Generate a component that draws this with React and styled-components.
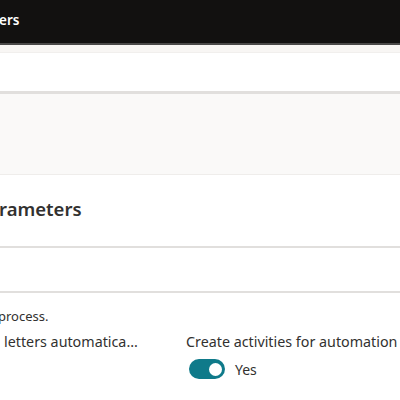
import React from "react";
import styled, { createGlobalStyle } from "styled-components";

const Global = createGlobalStyle`
  html, body { margin: 0; padding: 0; background: #ffffff; }
  body { width: 400px; height: 400px; overflow: hidden; font-family: "Noto Sans", "Open Sans", sans-serif; color: #323130; }
`;

const Page = styled.div`
  width: 400px;
  height: 400px;
  overflow: hidden;
  display: flex;
  flex-direction: column;
`;

const TopBar = styled.header`
  height: 43px;
  background: #121110;
  border-bottom: 2px solid #4a4948;
  display: flex;
  align-items: center;
  color: #ffffff;
  font-size: 13.5px;
  font-weight: 600;
  box-sizing: content-box;
`;

const TopTitle = styled.span`
  margin-left: -1px;
  margin-top: -3px;
`;

const Strip = styled.div`
  height: 7px;
  background: #f8f6f4;
  border-bottom: 1px solid #f1efed;
`;

const CommandBar = styled.div`
  height: 38px;
  background: #ffffff;
  border-bottom: 3px solid #e1dfdd;
`;

const Band = styled.div`
  height: 80px;
  background: #faf9f8;
  border-bottom: 1px solid #efedeb;
`;

const TitleRow = styled.div`
  height: 71px;
  display: flex;
  align-items: center;
  border-bottom: 2px solid #e1dfdd;
`;

const Title = styled.h1`
  margin: -5px 0 0 -1px;
  font-size: 18.5px;
  font-weight: 600;
  color: #323130;
`;

const TabRow = styled.div`
  height: 43px;
  border-bottom: 2px solid #e1dfdd;
`;

const Body = styled.div`
  padding-top: 15px;
  display: flex;
  flex-direction: column;
`;

const Description = styled.p`
  margin: 0 0 0 -2px;
  font-size: 13px;
  line-height: 16px;
  color: #323130;
`;

const Fields = styled.div`
  display: grid;
  grid-template-columns: 186px 1fr;
  margin-top: 9px;
`;

const Field = styled.div`
  display: flex;
  flex-direction: column;
  gap: 8px;
  white-space: nowrap;
`;

const Label = styled.span`
  font-size: 14.3px;
  line-height: 18px;
  color: #323130;
  margin-left: ${p => p.$indent || 0}px;
`;

const ToggleRow = styled.div`
  display: flex;
  align-items: center;
  gap: 10px;
  margin-left: 3px;
`;

const Toggle = styled.span`
  width: 36px;
  height: 20px;
  border-radius: 10px;
  background: #0f7a8a;
  display: flex;
  align-items: center;
  justify-content: flex-end;
  padding: 0 3px;
  box-sizing: border-box;
`;

const Knob = styled.span`
  width: 13px;
  height: 13px;
  border-radius: 50%;
  background: #ffffff;
`;

const ToggleText = styled.span`
  font-size: 14px;
  color: #323130;
`;

export default function App() {
  return (
    <Page>
      <Global />
      <TopBar><TopTitle>ers</TopTitle></TopBar>
      <Strip />
      <CommandBar />
      <Band />
      <TitleRow><Title>rameters</Title></TitleRow>
      <TabRow />
      <Body>
        <Description>process.</Description>
        <Fields>
          <Field>
            <Label $indent={4}>letters automatica...</Label>
          </Field>
          <Field>
            <Label>Create activities for automation</Label>
            <ToggleRow>
              <Toggle><Knob /></Toggle>
              <ToggleText>Yes</ToggleText>
            </ToggleRow>
          </Field>
        </Fields>
      </Body>
    </Page>
  );
}
